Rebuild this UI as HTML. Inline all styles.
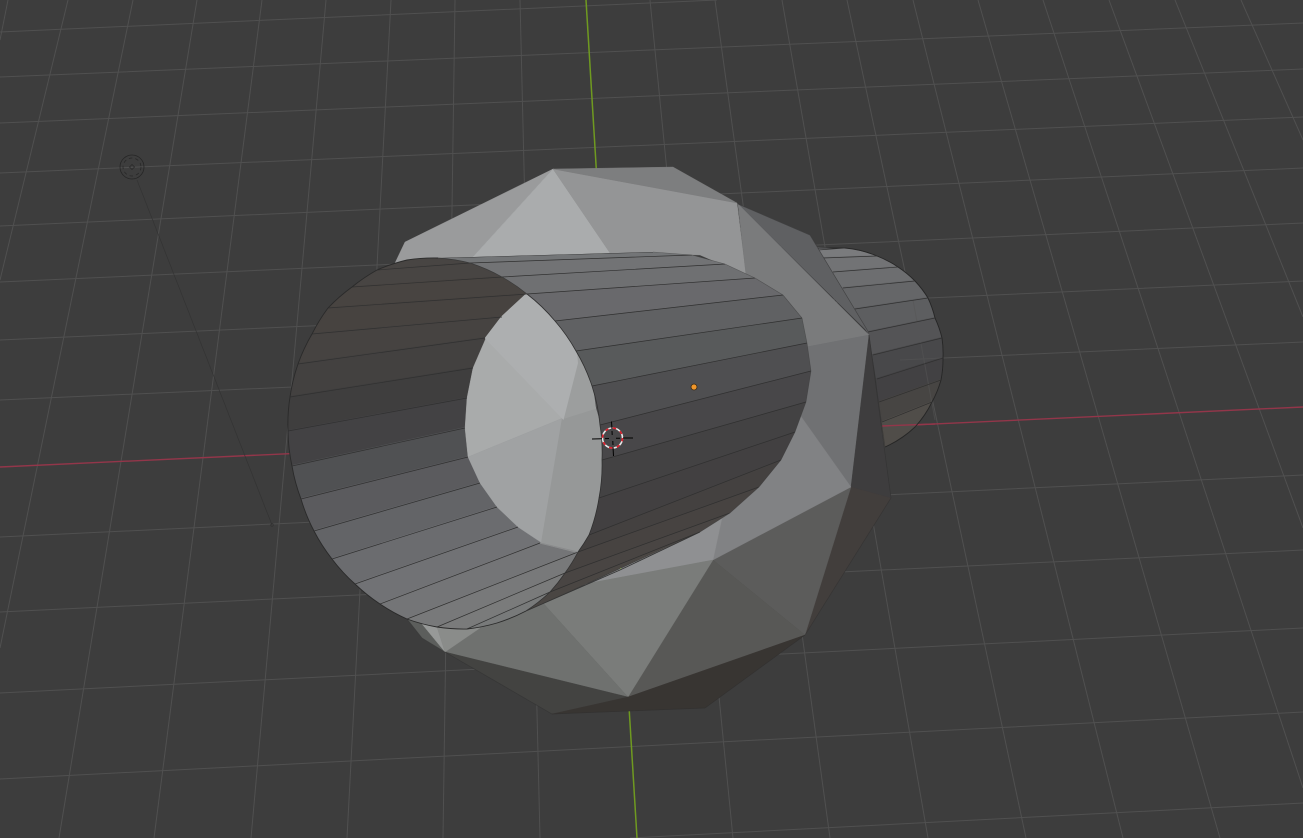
<!DOCTYPE html>
<html>
<head>
<meta charset="utf-8">
<title>Viewport</title>
<style>
html,body{margin:0;padding:0;background:#3d3d3d;width:1303px;height:838px;overflow:hidden}
svg{display:block}
</style>
</head>
<body>
<svg xmlns="http://www.w3.org/2000/svg" width="1303" height="838" viewBox="0 0 1303 838">
<defs>
<clipPath id="backClip"><path d="M810 240L817 247L845 248A105 105 0 0 1 877 256A105 105 0 0 1 898 267A105 105 0 0 1 915 281A105 105 0 0 1 928 298A105 105 0 0 1 935 318A105 105 0 0 1 942 338A105 105 0 0 1 943 358A105 105 0 0 1 941 380A105 105 0 0 1 932 402A105 105 0 0 1 915 427A105 105 0 0 1 885 447L860 450Z"/></clipPath>
<clipPath id="tubeClip"><path d="M526 611A175 175 0 0 1 497 623A175 175 0 0 1 467 629A175 175 0 0 1 437 627A175 175 0 0 1 407 619A175 175 0 0 1 380 604A175 175 0 0 1 355 584A175 175 0 0 1 332 559A175 175 0 0 1 314 531A175 175 0 0 1 301 499A175 175 0 0 1 292 466A175 175 0 0 1 288 431A175 175 0 0 1 290 397A175 175 0 0 1 298 364A175 175 0 0 1 312 334A175 175 0 0 1 328 308A175 175 0 0 1 352 287A175 175 0 0 1 377 270A175 175 0 0 1 407 260A175 175 0 0 1 438 258L653 252L692 255L725 264L755 278L783 295L802 318L807 343L811 371L806 402L795 432L781 460L759 487L730 513L700 532Z"/></clipPath>
<clipPath id="rimClip"><path d="M438 258A175 175 0 0 1 470 263A175 175 0 0 1 502 277A175 175 0 0 1 527 294A175 175 0 0 1 555 321A175 175 0 0 1 576 351A175 175 0 0 1 592 386A175 175 0 0 1 600 425A175 175 0 0 1 602 460A175 175 0 0 1 599 498A175 175 0 0 1 589 535A175 175 0 0 1 578 552A175 175 0 0 1 565 573A175 175 0 0 1 550 592A175 175 0 0 1 526 611L500 700L250 700L250 240Z"/></clipPath>
</defs>
<rect width="1303" height="838" fill="#3d3d3d"/>
<g stroke="#505050" stroke-width="1" fill="none">
<path d="M8 0L0 40M68 0L0 280M133 0L0 648M197 0L59 838M262 0L154 838M326 0L251 838M391 0L347 838M455 0L443 838M520 0L540 838M650 0L733 838M715 0L830 838M782 0L928 838M847 0L1026 838M913 0L1123 838M978 0L1220 838M1043 0L1303 788M1109 0L1303 528M1175 0L1303 317M1241 0L1303 140"/>
<path d="M0 32L717 0M0 77L1303 23M0 123L1303 69M0 173L1303 117M0 226L1303 168M0 282L1303 223M0 340L1303 281M0 400L1303 342M0 537L1303 475M0 612L1303 550M0 693L1303 628M0 779L1303 712M630 838L1303 803"/>
</g>
<path d="M0 467L1303 407" stroke="#93364a" stroke-width="1.4" fill="none"/>
<path d="M586 0L637 838" stroke="#6f9a20" stroke-width="1.5" fill="none"/>

<!-- light -->
<g fill="none" stroke="#262626">
<circle cx="132" cy="167" r="12" stroke-width="0.8"/>
<circle cx="132" cy="167" r="9" stroke-width="0.7" stroke-dasharray="3.5 3"/>
<path d="M132 164.5L134.5 167L132 169.5L129.5 167Z" stroke-width="0.7"/>
<path d="M137 180L272 525" stroke="#343434" stroke-width="0.7"/>
<circle cx="272" cy="525" r="1.3" stroke="#303030" stroke-width="0.6"/>
</g>

<!-- back cylinder -->
<g clip-path="url(#backClip)" stroke-width="2">
<path fill="#7a7b7d" stroke="#7a7b7d" d="M817 248L845 248L877 256L833 272Z"/>
<path fill="#727375" stroke="#727375" d="M823 258L877 256L898 267L833 272Z"/>
<path fill="#6d6e70" stroke="#6d6e70" d="M833 272L898 267L915 281L843 288Z"/>
<path fill="#656668" stroke="#656668" d="M843 288L915 281L928 298L855 309Z"/>
<path fill="#5d5e60" stroke="#5d5e60" d="M855 309L928 298L935 318L868 332Z"/>
<path fill="#545456" stroke="#545456" d="M868 332L935 318L942 338L873 355Z"/>
<path fill="#48484a" stroke="#48484a" d="M873 355L942 338L943 358L877 379Z"/>
<path fill="#424143" stroke="#424143" d="M877 379L943 358L941 380L879 402Z"/>
<path fill="#474543" stroke="#474543" d="M879 402L941 380L932 402L882 422Z"/>
<path fill="#504d49" stroke="#504d49" d="M882 422L932 402L915 427L885 447Z"/>
</g>
<g stroke="#565656" stroke-width="1" fill="none" opacity="0.55">
<path d="M913 300L935 420"/>
<path d="M900 360L943 358"/>
</g>
<path d="M882 426L935 424" stroke="#93364a" stroke-width="1.4" fill="none"/>
<g stroke="#303030" stroke-width="0.7" fill="none">
<path d="M817 248L845 248A105 105 0 0 1 877 256A105 105 0 0 1 898 267A105 105 0 0 1 915 281A105 105 0 0 1 928 298A105 105 0 0 1 935 318A105 105 0 0 1 942 338A105 105 0 0 1 943 358A105 105 0 0 1 941 380A105 105 0 0 1 932 402A105 105 0 0 1 915 427A105 105 0 0 1 885 447" stroke="#262626" stroke-width="0.9"/>
<path d="M818 250L845 248M823 258L877 256M833 272L898 267M843 288L915 281M855 309L928 298M868 332L935 318M873 355L942 338M877 379L943 358M879 402L941 380M882 422L932 402"/>
</g>

<!-- body faces -->
<g stroke-width="0.4">
<path fill="#9a9b9c" stroke="#9a9b9c" d="M553 169L405 242L395 263L472 258Z"/>
<path fill="#aaacad" stroke="#aaacad" d="M553 169L472 258L610 253Z"/>
<path fill="#949596" stroke="#949596" d="M553 169L737 203L746 275L700 255L610 253Z"/>
<path fill="#7d7e7f" stroke="#7d7e7f" d="M553 169L673 167L737 203Z"/>
<path fill="#5f6062" stroke="#5f6062" d="M738 204L810 235L869 333Z"/>
<path fill="#7a7b7c" stroke="#7a7b7c" d="M738 204L869 335L806 347L802 318L783 295L746 275Z"/>
<path fill="#707173" stroke="#707173" d="M869 335L851 487L800 415L806 400L811 371L806 347Z"/>
<path fill="#3e3d3e" stroke="#3e3d3e" d="M869 335L891 498L851 487Z"/>
<path fill="#423e3c" stroke="#423e3c" d="M851 487L891 498L805 635Z"/>
<path fill="#5c5c5b" stroke="#5c5c5b" d="M851 487L805 635L713 560Z"/>
<path fill="#818284" stroke="#818284" d="M851 487L713 560L722 518L759 487L781 460L795 432L800 415Z"/>
<path fill="#8f9092" stroke="#8f9092" d="M730 513L722 518L713 560L590 583L700 532Z"/>
<path fill="#585856" stroke="#585856" d="M713 560L628 697L805 635Z"/>
<path fill="#7a7c7a" stroke="#7a7c7a" d="M713 560L628 697L543 603L526 611L590 583Z"/>
<path fill="#6f716f" stroke="#6f716f" d="M543 603L628 697L445 652L467 629L497 623L526 611Z"/>
<path fill="#434341" stroke="#434341" d="M445 652L628 697L552 714Z"/>
<path fill="#383532" stroke="#383532" d="M628 697L805 635L705 708L552 714Z"/>
<path fill="#5c5e5c" stroke="#5c5e5c" d="M407 619L422 638L445 652L422 624Z"/>
<path fill="#979998" stroke="#979998" d="M422 624L445 652L437 627Z"/>
<path fill="#8a8c8a" stroke="#8a8c8a" d="M437 627L445 652L480 628Z"/>
</g>
<g fill="none" stroke="#303030" stroke-width="0.7" opacity="0.6">
<path d="M738 204L810 235L869 333"/>
<path d="M869 335L885 447M891 498L805 635L705 708L552 714L445 652L422 638L407 619"/>
<path d="M869 335L891 498"/>
</g>

<!-- tube -->
<g clip-path="url(#tubeClip)">
<g stroke-width="0.4">
<path fill="#737577" stroke="#737577" d="M438 258L653 252L692 255L470 263Z"/>
<path fill="#727375" stroke="#727375" d="M470 263L692 255L725 264L502 277Z"/>
<path fill="#6f7072" stroke="#6f7072" d="M502 277L725 264L755 278L527 294Z"/>
<path fill="#69696c" stroke="#69696c" d="M527 294L755 278L783 295L555 321Z"/>
<path fill="#606163" stroke="#606163" d="M555 321L783 295L802 318L576 351Z"/>
<path fill="#585a5b" stroke="#585a5b" d="M576 351L802 318L807 343L592 386Z"/>
<path fill="#4f4f51" stroke="#4f4f51" d="M592 386L807 343L811 371L600 425Z"/>
<path fill="#484749" stroke="#484749" d="M600 425L811 371L806 402L602 460Z"/>
<path fill="#434243" stroke="#434243" d="M602 460L806 402L795 432L599 498Z"/>
<path fill="#424041" stroke="#424041" d="M599 498L795 432L781 460L589 535Z"/>
<path fill="#444140" stroke="#444140" d="M589 535L781 460L759 487L578 552Z"/>
<path fill="#474341" stroke="#474341" d="M578 552L759 487L730 513L565 573Z"/>
<path fill="#494543" stroke="#494543" d="M565 573L730 513L700 532L550 592Z"/>
<path fill="#4a4643" stroke="#4a4643" d="M550 592L700 532L526 611Z"/>
</g>
<g fill="none" stroke="#303030" stroke-width="0.7">
<path d="M438 258L653 252M470 263L692 255M502 277L725 264M527 294L755 278M555 321L783 295M576 351L802 318M592 386L807 343M600 425L811 371M602 460L806 402M599 498L795 432M589 535L781 460M578 552L759 487M565 573L730 513M550 592L700 532"/>
</g>
<g clip-path="url(#rimClip)">
<g stroke-width="2">
<path fill="#484543" stroke="#484543" d="M438 258L407 260L377 270L470 263Z"/>
<path fill="#484543" stroke="#484543" d="M377 270L352 287L502 277L470 263Z"/>
<path fill="#484441" stroke="#484441" d="M352 287L328 308L527 294L502 277Z"/>
<path fill="#474340" stroke="#474340" d="M328 308L312 334L502 317L527 294Z"/>
<path fill="#464341" stroke="#464341" d="M312 334L298 364L485 338L502 317Z"/>
<path fill="#434140" stroke="#434140" d="M298 364L290 397L473 368L485 338Z"/>
<path fill="#3f3e3e" stroke="#3f3e3e" d="M290 397L288 431L467 398L473 368Z"/>
<path fill="#434244" stroke="#434244" d="M288 431L292 466L465 428L467 398Z"/>
<path fill="#505153" stroke="#505153" d="M292 466L301 499L468 457L465 428Z"/>
<path fill="#5b5b5e" stroke="#5b5b5e" d="M301 499L314 531L480 483L468 457Z"/>
<path fill="#636467" stroke="#636467" d="M314 531L332 559L497 507L480 483Z"/>
<path fill="#6b6c6f" stroke="#6b6c6f" d="M332 559L355 584L518 527L497 507Z"/>
<path fill="#717275" stroke="#717275" d="M355 584L380 604L540 543L518 527Z"/>
<path fill="#747577" stroke="#747577" d="M380 604L407 619L578 552L540 543Z"/>
<path fill="#78797a" stroke="#78797a" d="M407 619L437 627L565 573L578 552Z"/>
<path fill="#7a7b7b" stroke="#7a7b7b" d="M437 627L467 629L550 592L565 573Z"/>
<path fill="#787a7a" stroke="#787a7a" d="M467 629L497 623L526 611L550 592Z"/>
</g>
<!-- disc seen through tube -->
<g stroke-width="0.4">
<path fill="#a9abab" stroke="#a9abab" d="M486 338L473 368L467 398L465 428L468 457L563 418Z"/>
<path fill="#a0a2a3" stroke="#a0a2a3" d="M468 457L563 418L542 543L518 527L497 507L480 483Z"/>
</g>
<g stroke-width="2">
<path fill="#969898" stroke="#969898" d="M563 418L595 408L600 425L602 460L599 498L589 535L578 552L542 543Z"/>
<path fill="#9c9e9e" stroke="#9c9e9e" d="M563 418L577 363L576 351L592 386L595 408Z"/>
<path fill="#adafb0" stroke="#adafb0" d="M527 294L502 317L486 338L563 418L577 363L576 351L555 321Z"/>
</g>
<g fill="none" stroke="#303030" stroke-width="0.7">
<path d="M377 270L470 263M352 287L502 277M328 308L527 294M312 334L502 317M298 364L485 338M290 397L473 368M288 431L467 398M292 466L465 428M301 499L468 457M314 531L480 483M332 559L497 507M355 584L518 527M380 604L540 543M407 619L578 552M437 627L565 573M467 629L550 592"/>
</g>
<path d="M540 543L578 552" stroke="#8a8b8c" stroke-width="1" fill="none"/>
</g>
</g>

<!-- tube edges -->
<g fill="none" stroke="#2a2a2a" stroke-width="0.9">
<path d="M526 611A175 175 0 0 1 497 623A175 175 0 0 1 467 629A175 175 0 0 1 437 627A175 175 0 0 1 407 619A175 175 0 0 1 380 604A175 175 0 0 1 355 584A175 175 0 0 1 332 559A175 175 0 0 1 314 531A175 175 0 0 1 301 499A175 175 0 0 1 292 466A175 175 0 0 1 288 431A175 175 0 0 1 290 397A175 175 0 0 1 298 364A175 175 0 0 1 312 334A175 175 0 0 1 328 308A175 175 0 0 1 352 287A175 175 0 0 1 377 270A175 175 0 0 1 407 260A175 175 0 0 1 438 258"/>
<path d="M527 294A175 175 0 0 1 555 321A175 175 0 0 1 576 351A175 175 0 0 1 592 386A175 175 0 0 1 600 425A175 175 0 0 1 602 460A175 175 0 0 1 599 498A175 175 0 0 1 589 535A175 175 0 0 1 578 552" stroke="#303030" stroke-width="0.8"/>
<path d="M438 258A175 175 0 0 1 470 263A175 175 0 0 1 502 277A175 175 0 0 1 527 294" stroke="#3a3a3a" stroke-width="0.7"/>
<path d="M578 552A175 175 0 0 1 565 573A175 175 0 0 1 550 592A175 175 0 0 1 526 611L620 570L700 532" stroke="#333" stroke-width="0.8"/>
</g>
<path d="M653 252L692 255L725 264L755 278L783 295L802 318L807 343L811 371L806 402L795 432L781 460L759 487L730 513L700 532" fill="none" stroke="#3a3a3b" stroke-width="0.6" opacity="0.55"/>

<!-- origin -->
<circle cx="694" cy="387" r="3" fill="#f0962a" stroke="#3a2a14" stroke-width="0.8"/>

<!-- 3D cursor -->
<g fill="none">
<circle cx="612.5" cy="438" r="10" stroke="#e8e8e8" stroke-width="1.6"/>
<circle cx="612.5" cy="438" r="10" stroke="#d81f2c" stroke-width="1.7" stroke-dasharray="3.4 4.45"/>
<path d="M592 439L602 438.8M605 438.6L609 438.5M616 438.2L620 438.2M623 438L633 438M611.5 421.5L612 429M612 431L612.2 435M612.8 441L613 445M613 447L613.5 456" stroke="#000" stroke-width="1"/>
</g>
</svg>
</body>
</html>
